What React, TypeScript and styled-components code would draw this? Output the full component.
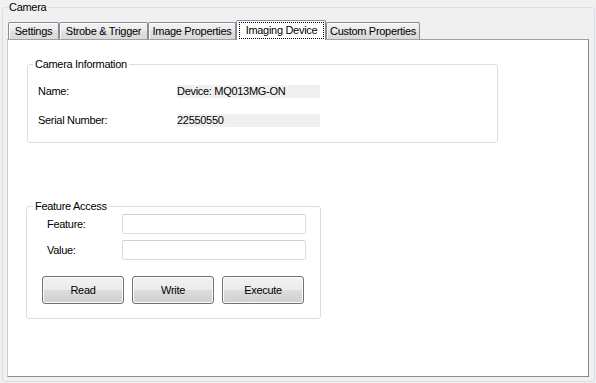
import React from 'react';
import styled, { createGlobalStyle } from 'styled-components';

const GlobalStyle = createGlobalStyle`
  html, body {
    margin: 0;
    padding: 0;
    background: #f0f0f0;
  }
  body {
    font-family: "Liberation Sans", Arial, sans-serif;
    font-size: 11px;
    letter-spacing: -0.3px;
    color: #000;
  }
`;

const Window = styled.div`
  width: 596px;
  height: 383px;
  box-sizing: border-box;
  padding: 1px 0 0 2px;
  background: #f0f0f0;
  overflow: hidden;
`;

const GroupBox = styled.fieldset<{ $width: number; $pad: string; $top?: number; $left?: number }>`
  box-sizing: border-box;
  width: ${(p) => p.$width}px;
  min-width: 0;
  margin: ${(p) => p.$top ?? 0}px 0 0 ${(p) => p.$left ?? 0}px;
  padding: ${(p) => p.$pad};
  border: 1px solid #d5dfe5;
  border-radius: 3px;
`;

const Caption = styled.legend<{ $indent: number }>`
  margin-left: ${(p) => p.$indent}px;
  padding: 0 2px;
  line-height: 13px;
  font-size: 11px;
`;

const TabStrip = styled.div`
  display: flex;
  align-items: flex-end;
  height: 20px;
  margin: 0 0 -1px 1px;
  position: relative;
  z-index: 1;
`;

const Tab = styled.div<{ $width: number; $active?: boolean }>`
  box-sizing: border-box;
  width: ${(p) => p.$width}px;
  height: ${(p) => (p.$active ? 20 : 17)}px;
  margin-bottom: ${(p) => (p.$active ? 0 : 1)}px;
  padding-top: ${(p) => (p.$active ? 0 : 1)}px;
  border: 1px solid #898c95;
  border-bottom: none;
  border-radius: 2px 2px 0 0;
  background: ${(p) =>
    p.$active
      ? '#fff'
      : 'linear-gradient(#f3f3f3 0%, #ebebeb 45%, #dfdfdf 55%, #d9d9d9 100%)'};
  box-shadow: ${(p) => (p.$active ? 'none' : 'inset 1px 1px 0 #fbfbfb')};
  display: flex;
  justify-content: center;
  line-height: 15px;
  white-space: nowrap;
`;

const FocusRing = styled.div`
  flex: 1;
  margin: 1px 1px 0 2px;
  height: 17px;
  box-sizing: border-box;
  border: 1px dotted #000;
  text-align: center;
  line-height: 15px;
`;

const TabPage = styled.div`
  box-sizing: border-box;
  height: 338px;
  background: #fff;
  border-style: solid;
  border-width: 1px;
  border-color: #a0a0a0 #8a8a8f #8a8a8f #d0d0d0;
  padding: 18px 0 0 19px;
`;

const InfoRow = styled.div<{ $top: number }>`
  display: grid;
  grid-template-columns: 139px 143px;
  margin-top: ${(p) => p.$top}px;
  padding-left: 10px;
  line-height: 13px;
  height: 13px;
`;

const InfoValue = styled.div`
  background: #f0f0f0;
  white-space: nowrap;
`;

const FieldRow = styled.div<{ $top: number }>`
  display: grid;
  grid-template-columns: 75px 184px;
  align-items: center;
  margin-top: ${(p) => p.$top}px;
  padding-left: 20px;
`;

const TextBox = styled.div`
  box-sizing: border-box;
  height: 20px;
  background: #fff;
  border: 1px solid #dadce1;
  border-top-color: #cfd1d6;
  border-radius: 2px;
`;

const ButtonRow = styled.div`
  display: flex;
  gap: 8px;
  margin-top: 16px;
  padding-left: 15px;
`;

const PushButton = styled.div`
  box-sizing: border-box;
  width: 82px;
  height: 28px;
  border: 1px solid #707070;
  border-radius: 3px;
  background: linear-gradient(#f2f2f2 0%, #ebebeb 50%, #dddddd 50%, #cfcfcf 100%);
  box-shadow: inset 0 0 0 1px #fcfcfc;
  display: flex;
  align-items: center;
  justify-content: center;
`;

const tabs = [
  { label: 'Settings', width: 51 },
  { label: 'Strobe & Trigger', width: 89 },
  { label: 'Image Properties', width: 88 },
  { label: 'Imaging Device', width: 90, active: true },
  { label: 'Custom Properties', width: 94 },
];

const App: React.FC = () => {
  return (
    <Window>
      <GlobalStyle />
      <GroupBox $width={593} $pad="6px 5px 4px 4px">
        <Caption $indent={0}>Camera</Caption>
        <TabStrip>
          {tabs.map((t) => (
            <Tab key={t.label} $width={t.width} $active={t.active}>
              {t.active ? <FocusRing>{t.label}</FocusRing> : t.label}
            </Tab>
          ))}
        </TabStrip>
        <TabPage>
          <GroupBox $width={471} $pad="0 0 15px 0">
            <Caption $indent={5}>Camera Information</Caption>
            <InfoRow $top={14}>
              <span>Name:</span>
              <InfoValue>Device: MQ013MG-ON</InfoValue>
            </InfoRow>
            <InfoRow $top={16}>
              <span>Serial Number:</span>
              <InfoValue>22550550</InfoValue>
            </InfoRow>
          </GroupBox>
          <GroupBox $width={295} $pad="0 0 14px 0" $top={57} $left={-1}>
            <Caption $indent={6}>Feature Access</Caption>
            <FieldRow $top={1}>
              <span>Feature:</span>
              <TextBox />
            </FieldRow>
            <FieldRow $top={6}>
              <span>Value:</span>
              <TextBox />
            </FieldRow>
            <ButtonRow>
              <PushButton>Read</PushButton>
              <PushButton>Write</PushButton>
              <PushButton>Execute</PushButton>
            </ButtonRow>
          </GroupBox>
        </TabPage>
      </GroupBox>
    </Window>
  );
};

export default App;
